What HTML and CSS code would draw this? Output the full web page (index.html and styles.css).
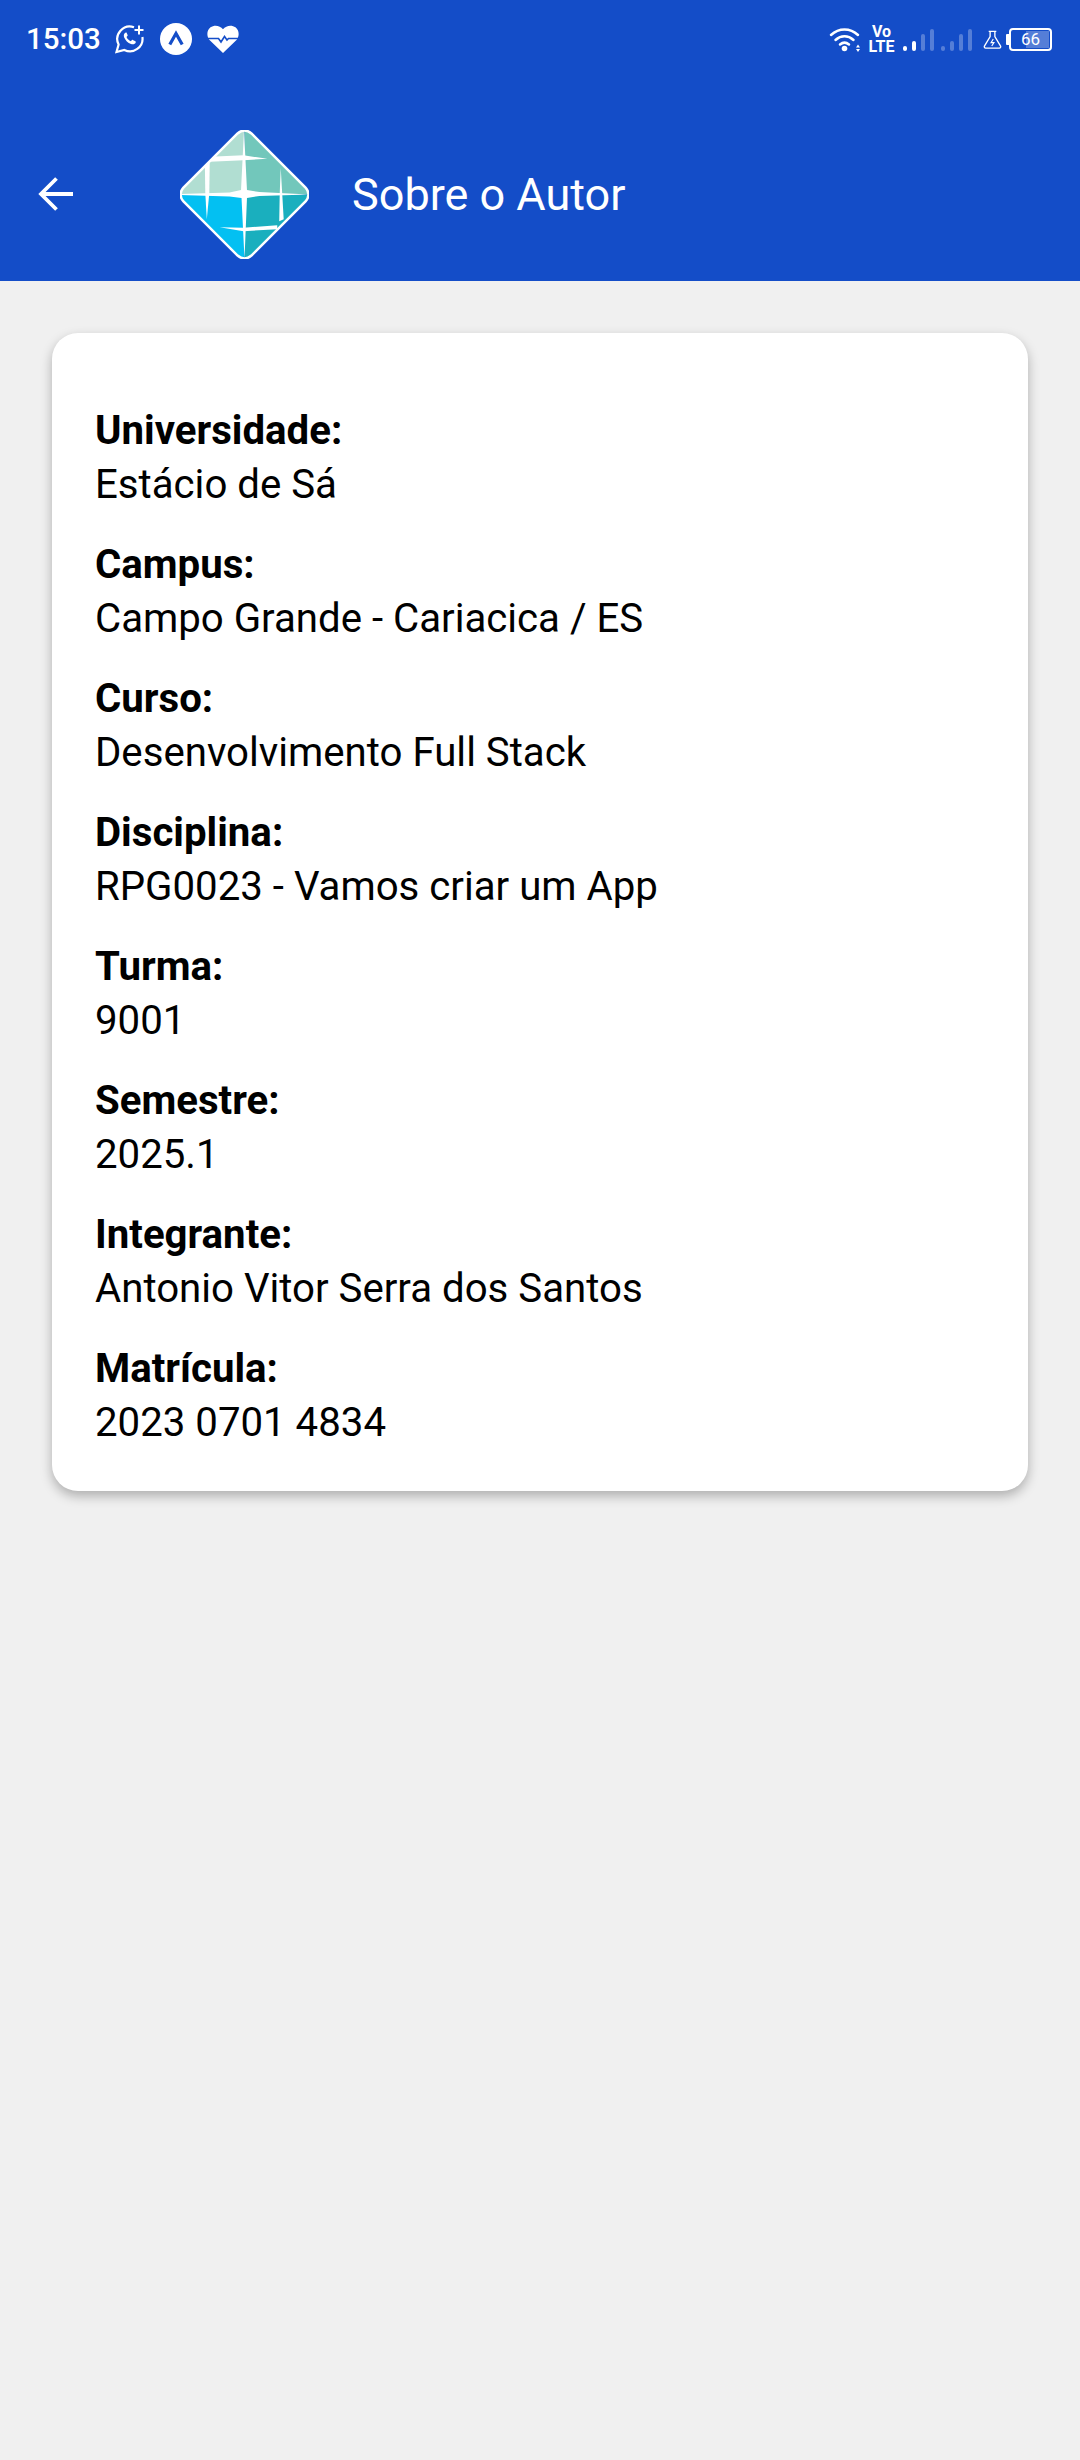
FILE: index.html
```html
<!DOCTYPE html>
<html lang="pt">
<head>
<meta charset="utf-8">
<title>Sobre o Autor</title>
<link rel="stylesheet" href="styles.css">
</head>
<body>
<div class="top">
  <div class="status">
    <span class="time">15:03</span>
    <svg class="ico-wa" viewBox="0 0 30 29"><path d="M19 2.200A12.500 12.500 0 0 0 3.600 19.500L1.500 27l7.800-2.100A12.500 12.500 0 0 0 27.400 12" fill="none" stroke="#fff" stroke-width="2.200"/><path d="M24 .5v9M19.500 5h9" stroke="#fff" stroke-width="2"/><path d="M10.800 7.500c-1.800.8-2.500 2.800-1.600 5 1.300 3 3.500 5.300 6.800 6.500 2.200.8 4.200 0 4.800-1.800.1-.5 0-.8-.4-1l-2.600-1.300c-.4-.2-.7-.1-.9.200l-1 1.200c-2-.8-3.500-2.300-4.400-4.300l.9-1c.3-.3.3-.6.2-1l-1.100-2.500z" fill="#fff"/></svg>
    <svg class="ico-expo" viewBox="0 0 32 32"><circle cx="16" cy="16" r="16" fill="#fff"/><path d="M9.800 21.500 16 10.500l6.200 11" fill="none" stroke="#144dc8" stroke-width="3.200"/></svg>
    <svg class="ico-heart" viewBox="0 0 32 28"><path d="M16 28 2.500 15C-.5 11.500-.5 5.500 3.500 2.300c4-2.900 9.500-1.800 12.500 2 3-3.800 8.500-4.900 12.500-2 4 3.200 4 9.200 1 12.700z" fill="#fff"/><path d="M0 13.500h11.500l2.500 3.500 3.500-5.500 2.500 3.500 1.500-1.500H32" fill="none" stroke="#144dc8" stroke-width="1.600"/></svg>
    <div class="status-right">
      <svg class="ico-wifi" viewBox="0 0 32 26"><path d="M2 9c8-7.500 19-7.500 27 0M6.500 14c5.500-5 12.500-5 18 0M11 18.500c3-2.500 6-2.500 9 0" fill="none" stroke="#fff" stroke-width="2.500" stroke-linecap="round"/><circle cx="15.500" cy="22.500" r="2.800" fill="#fff"/><path d="M27 21.500l2-3 2 3zM27 23l2 3 2-3z" fill="#fff"/></svg>
      <span class="volte"><span>Vo</span><span>LTE</span></span>
      <div class="bars">
        <i class="b1 on"></i><i class="b2 on"></i><i class="b3"></i><i class="b4"></i>
        <i class="b1 gap"></i><i class="b2"></i><i class="b3"></i><i class="b4"></i>
      </div>
      <svg class="ico-flask" viewBox="0 0 20 20"><path d="M6 1.500h8M7.500 1.500v5.500L1.500 17c-.5 1 .2 2 1.200 2h14.600c1 0 1.700-1 1.200-2l-6-10V1.500" fill="none" stroke="#fff" stroke-width="1.400"/><path d="M10.800 9.500l-2.300 3.800h3l-2.300 3.500" fill="none" stroke="#fff" stroke-width="1.200"/></svg>
      <div class="batt-wrap">
        <i class="batt-tip"></i>
        <div class="batt"><i class="batt-fill"></i><span>66</span></div>
      </div>
    </div>
  </div>
  <header class="bar">
    <svg class="back" viewBox="0 0 36 36"><path d="M35 18H3M18.500 2.500 3 18l15.500 15.500" fill="none" stroke="#fff" stroke-width="3.800"/></svg>
    <svg class="logo" viewBox="0 0 130 130">
      <defs>
        <clipPath id="dia"><path d="M58 3.500q7-6 14 0l54.500 54.500q6 7 0 14L72 126.500q-7 6-14 0L3.500 72q-6-7 0-14z"/></clipPath>
      </defs>
      <g clip-path="url(#dia)">
        <rect x="0" y="0" width="65" height="65" fill="#b1ded2"/>
        <rect x="65" y="0" width="65" height="65" fill="#72c7bb"/>
        <rect x="0" y="65" width="65" height="65" fill="#03c0f2"/>
        <rect x="65" y="65" width="65" height="65" fill="#1aafbe"/>
        <path d="M0 64.500 50 63 61.500 60.500 64.500 0 67.500 60.500 80 62.500 130 65 80 66.500 67.500 68.500 65 130 62 68.500 50 67 0 65.500z" fill="#fff"/>
        <path d="M30 27 64 25.500 88 29 64 30.500 30 32z" fill="#fff"/>
        <path d="M25 31 30 31 29.500 64 27 90 25.500 64z" fill="#fff"/>
        <path d="M101.500 38 103 64 104.500 90 100 92 100.500 64z" fill="#fff"/>
        <path d="M40 98 64 98.500 98 96 98 100 64 102z" fill="#fff"/>
      </g>
      <path d="M58 3.500q7-6 14 0l54.500 54.500q6 7 0 14L72 126.500q-7 6-14 0L3.500 72q-6-7 0-14z" fill="none" stroke="#fff" stroke-width="2.500"/>
    </svg>
    <h1 class="title">Sobre o Autor</h1>
  </header>
</div>
<main class="card">
  <section class="row"><h2>Universidade:</h2><p>Estácio de Sá</p></section>
  <section class="row"><h2>Campus:</h2><p>Campo Grande - Cariacica / ES</p></section>
  <section class="row"><h2>Curso:</h2><p>Desenvolvimento Full Stack</p></section>
  <section class="row"><h2>Disciplina:</h2><p>RPG0023 - Vamos criar um App</p></section>
  <section class="row"><h2>Turma:</h2><p>9001</p></section>
  <section class="row"><h2>Semestre:</h2><p>2025.1</p></section>
  <section class="row"><h2>Integrante:</h2><p>Antonio Vitor Serra dos Santos</p></section>
  <section class="row"><h2>Matrícula:</h2><p>2023 0701 4834</p></section>
</main>
</body>
</html>
```
FILE: styles.css
```css
* { box-sizing: border-box; }
html, body { margin: 0; padding: 0; }
body {
  width: 1080px;
  height: 2460px;
  overflow: hidden;
  background: #f0f0f0;
  font-family: Roboto, "Liberation Sans", sans-serif;
  color: #000;
}
.top { background: #144dc8; height: 281px; color: #fff; }
.status {
  height: 78px;
  display: flex;
  align-items: center;
  padding: 0 28px 0 26px;
}
.time { font-size: 29.500px; font-weight: 500; width: 74px; }
.ico-wa { width: 30px; height: 29px; margin-left: 15px; }
.ico-expo { width: 32px; height: 32px; margin-left: 15px; }
.ico-heart { width: 32px; height: 28px; margin-left: 15px; }
.status-right { margin-left: auto; display: flex; align-items: center; }
.ico-wifi { width: 32px; height: 26px; }
.volte {
  display: flex;
  flex-direction: column;
  align-items: center;
  width: 27px;
  margin-left: 7px;
  font-size: 16px;
  font-weight: 700;
  line-height: 15px;
}
.bars { display: flex; align-items: flex-end; gap: 5px; height: 24px; margin-left: 8px; }
.bars i { width: 4px; border-radius: 2px; background: rgba(255,255,255,.28); display: block; }
.bars .b1 { height: 5px; }
.bars .b2 { height: 10px; }
.bars .b3 { height: 17px; }
.bars .b4 { height: 22px; }
.bars .on { background: #fff; }
.bars .gap { margin-left: 2px; }
.ico-flask { width: 19px; height: 19px; margin-left: 11px; }
.batt-wrap { display: flex; align-items: center; margin-left: 4px; }
.batt-tip { width: 3px; height: 11px; background: #fff; border-radius: 1px 0 0 1px; }
.batt {
  position: relative;
  width: 43px;
  height: 23px;
  border: 2px solid #fff;
  border-radius: 4px;
  display: flex;
  align-items: center;
  justify-content: center;
  font-size: 17px;
  line-height: 17px;
}
.batt-fill { position: absolute; top: 1px; bottom: 1px; right: 1px; width: 23px; background: rgba(255,255,255,.28); }
.batt span { position: relative; }
.bar { height: 203px; display: flex; align-items: center; padding: 29px 0 0 38px; }
.back { width: 36px; height: 36px; flex: none; }
.logo { width: 129px; height: 129px; margin-left: 106px; flex: none; }
.title { margin: 0 0 0 43px; font-size: 45px; font-weight: 400; }
.card {
  margin: 52px 52px 0;
  height: 1158px;
  padding: 71px 43px 0;
  background: #fff;
  border-radius: 26px;
  box-shadow: 0 5px 12px rgba(0,0,0,.28);
  display: flex;
  flex-direction: column;
  gap: 26px;
}
.row h2, .row p { margin: 0; font-size: 40.200px; line-height: 54px; }
.row h2 { font-weight: 700; }
.row p { font-weight: 400; }
```
